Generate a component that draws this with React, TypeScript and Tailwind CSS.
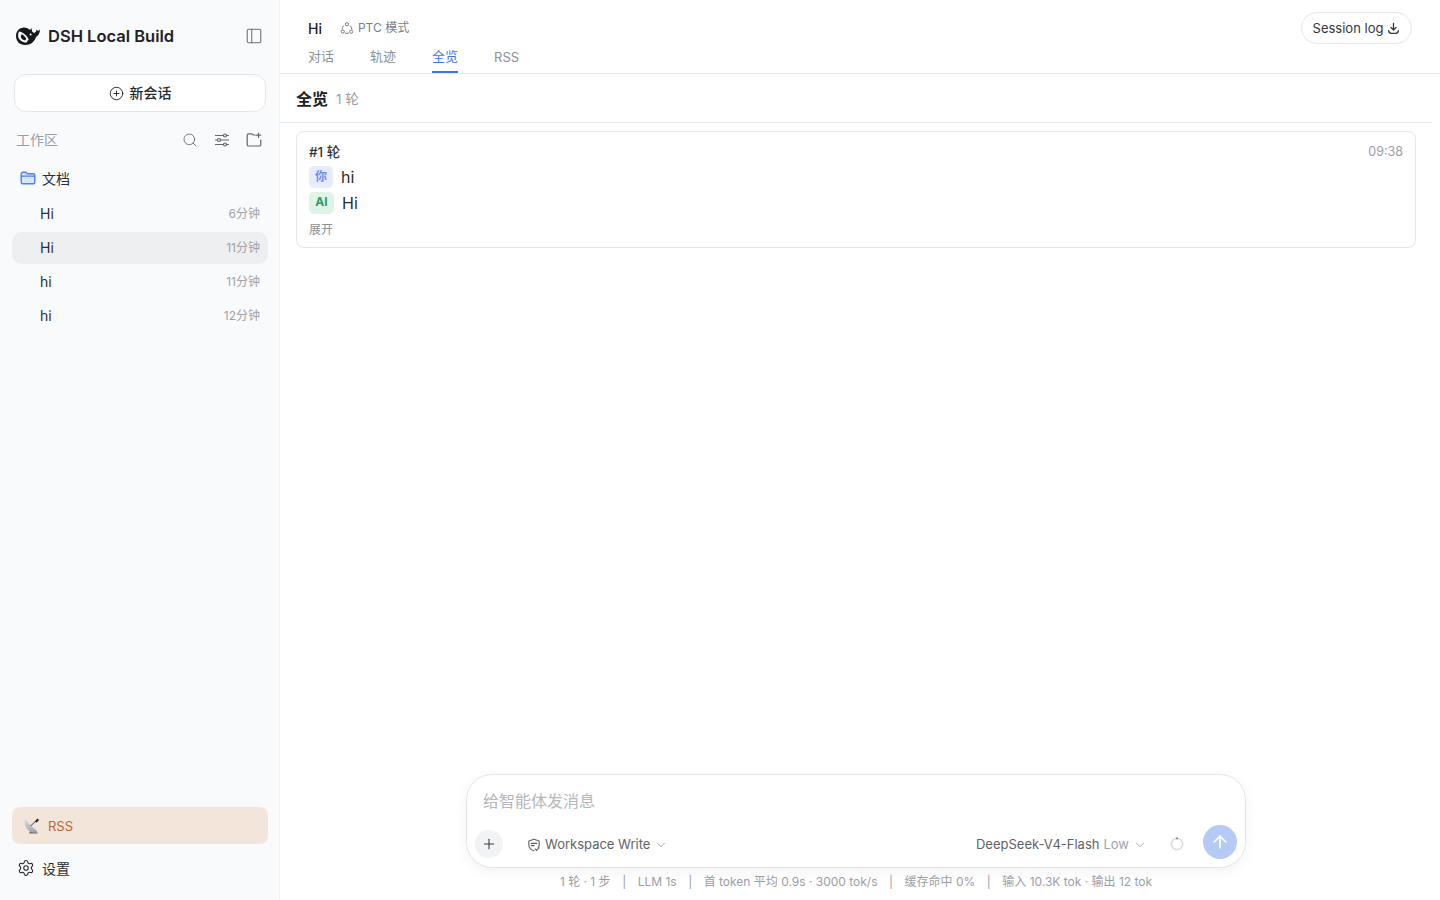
import { ChevronDown, CirclePlus, PanelLeft, Plus, Search, Settings, ArrowUp } from "lucide-react";

const sessions = [
  { title: "Hi", age: "6分钟" },
  { title: "Hi", age: "11分钟", active: true },
  { title: "hi", age: "11分钟" },
  { title: "hi", age: "12分钟" },
];

function WhaleLogo() {
  return (
    <svg viewBox="0 0 24 18" className="h-[18px] w-6 shrink-0">
      <path
        d="M8 .5C10.500.5 12.500 1.500 14 3l1.500-2 .6 3.600 1.900 1.400c1.500-.5 2.500-1.500 2.500-3.500l1.500 1.500L24 2.500C23.800 6 22.500 8.500 20 10c-1 3.500-4 8-11 8C3.500 18 0 14 0 9 0 4 3.500.5 8 .5z"
        fill="#16181d"
      />
      <path d="M3 4.500c3.500.4 7.500 3.500 9.700 7.700l-2.500 3.600C7 15.400 3.900 14 2.700 11.300 1.800 9.200 2 6.500 3 4.500z" fill="#f9fafc" />
      <path d="M5.800 7.200c2 1 3.600 2.700 4.500 4.600l-1.100 1.700C7.300 13 5.400 11.800 5 10.400c-.3-1.100 0-2.300.8-3.200z" fill="#16181d" />
      <circle cx="14.600" cy="7.400" r="1" fill="#f9fafc" />
    </svg>
  );
}

function TuneIcon() {
  return (
    <svg viewBox="0 0 16 16" className="h-4 w-4" fill="none" stroke="#62666c" strokeWidth="1.200" strokeLinecap="round">
      <path d="M1.500 3.500h8M12.500 3.500h2M1.500 8h2M6.500 8h8M1.500 12.500h8M12.500 12.500h2" />
      <circle cx="11" cy="3.500" r="1.500" />
      <circle cx="5" cy="8" r="1.500" />
      <circle cx="11" cy="12.500" r="1.500" />
    </svg>
  );
}

function FolderPlusIcon() {
  return (
    <svg viewBox="0 0 16 16" className="h-4 w-4" fill="none" stroke="#62666c" strokeWidth="1.200" strokeLinecap="round" strokeLinejoin="round">
      <path d="M9.200 3H7.200L6 1.800H2.800C1.900 1.800 1.200 2.500 1.200 3.400v9c0 .9.700 1.600 1.600 1.600h10.400c.9 0 1.600-.7 1.600-1.600V8" />
      <path d="M12.500 1v4.400M10.300 3.200h4.400" />
    </svg>
  );
}

function DocsFolderIcon() {
  return (
    <svg viewBox="0 0 16 16" className="h-4 w-4 shrink-0" fill="none" stroke="#4f83f1" strokeWidth="1.400" strokeLinejoin="round">
      <path d="M1.200 3.800c0-.9.700-1.600 1.600-1.600h3l1.500 1.500h5.900c.9 0 1.600.7 1.600 1.600v6.900c0 .9-.7 1.600-1.600 1.600H2.800c-.9 0-1.600-.7-1.600-1.600z" fill="#d6e4fc" />
      <path d="M1.200 7.200c0-.6.500-1.100 1.100-1.100h11.400c.6 0 1.100.5 1.100 1.100" />
    </svg>
  );
}

function SatelliteDish() {
  return (
    <svg viewBox="0 0 18 18" className="h-4 w-4 shrink-0">
      <defs>
        <linearGradient id="dish" x1="0" y1="0" x2="1" y2="1">
          <stop offset="0" stopColor="#d5dade" />
          <stop offset="1" stopColor="#949ca3" />
        </linearGradient>
      </defs>
      <path d="M8 12.500 5.500 17.500h10l-2-4z" fill="#6d7278" />
      <path d="M1 1.500c-1 5 .3 9 3 11.700 2.700 2.600 7.500 3.800 11.500 3z" fill="url(#dish)" />
      <path d="M7.500 9 13 3.500" stroke="#33363b" strokeWidth="1.100" />
      <path d="M12.200 3.800 15 .5l2 1.800-3 3.100z" fill="#26292e" />
    </svg>
  );
}

function PtcIcon() {
  return (
    <svg viewBox="0 0 14 14" className="h-3.5 w-3.5" fill="none" stroke="#7a7f87" strokeWidth="1">
      <circle cx="7" cy="3.200" r="1.600" />
      <circle cx="2.800" cy="10.600" r="1.600" />
      <circle cx="11.200" cy="10.600" r="1.600" />
      <path d="M3.900 4.500a5 5 0 0 0-1.700 3.900M10.100 4.500a5 5 0 0 1 1.700 3.900M5 12a5 5 0 0 0 4 0" />
    </svg>
  );
}

function ShieldCheckIcon() {
  return (
    <svg viewBox="0 0 14 14" className="h-3.5 w-3.5" fill="none" stroke="#5f6368" strokeWidth="1.100" strokeLinecap="round" strokeLinejoin="round">
      <path d="M7 1.200 12.200 3v3.400c0 1.300-.3 2.400-1 3.300M7 12.800c-2.900-1-5.200-3-5.200-6.400V3L7 1.200" />
      <path d="M4.300 5.400h5.400M4.300 7.600h3" />
      <path d="m8.300 11 1.300 1.300 2.300-2.500" />
    </svg>
  );
}

function DownloadTrayIcon() {
  return (
    <svg viewBox="0 0 14 14" className="h-[13px] w-[13px]" fill="none" stroke="#33363b" strokeWidth="1.400" strokeLinecap="round" strokeLinejoin="round">
      <path d="M7 1.500v7M4.200 5.800 7 8.600l2.800-2.800" />
      <path d="M1.800 9.200c0 1.900 1.100 3 2.900 3h4.600c1.800 0 2.900-1.100 2.900-3" />
    </svg>
  );
}

function ContextRing() {
  return (
    <svg viewBox="0 0 14 14" className="mt-1 h-[14px] w-[14px] shrink-0" fill="none" strokeWidth="1.600">
      <circle cx="7" cy="7" r="5.600" stroke="#dcdde0" />
      <path d="M6.200 1.450a5.600 5.600 0 0 1 1.600 0" stroke="#6b7076" />
    </svg>
  );
}

function Sidebar() {
  return (
    <aside className="flex h-full w-[280px] shrink-0 flex-col border-r border-[#f1f2f4] bg-[#f9fafc]">
      <div className="flex h-[74px] items-center justify-between pb-[2px] pl-4 pr-4">
        <div className="flex items-center gap-2">
          <WhaleLogo />
          <span className="text-[16.5px] font-semibold text-[#1f2125]">DSH Local Build</span>
        </div>
        <PanelLeft className="h-[18px] w-[18px] text-[#6b7076]" strokeWidth={1.4} />
      </div>
      <div className="pl-[14px] pr-[13px]">
        <button className="flex h-[38px] w-full items-center justify-center gap-[6px] rounded-[12px] border border-[#e5e6e9] bg-white pb-[2px] text-[14px] font-medium text-[#26282c]">
          <CirclePlus className="mt-[2px] h-[15px] w-[15px]" strokeWidth={1.5} />
          新会话
        </button>
      </div>
      <div className="mt-[18px] flex h-[20px] items-center justify-between pl-4 pr-[17px]">
        <span className="pb-[2px] text-[14px] text-[#9a9ea5]">工作区</span>
        <div className="flex items-center gap-4 text-[#62666c]">
          <Search className="h-4 w-4" strokeWidth={1.3} />
          <TuneIcon />
          <FolderPlusIcon />
        </div>
      </div>
      <div className="mt-[18px] flex h-5 items-center gap-[6px] pl-5 text-[14px] text-[#2c2e33]">
        <DocsFolderIcon />
        文档
      </div>
      <div className="mt-[10px] flex flex-col pl-3 pr-[11px]">
        {sessions.map((s, i) => (
          <div
            key={i}
            className={`flex h-8 items-center justify-between rounded-[10px] pl-7 pr-2 ${s.active ? "bg-[#eeeff1]" : ""} ${i > 0 ? "mt-[2px]" : ""}`}
          >
            <span className="pb-[2px] text-[14px] text-[#2c2e33]">{s.title}</span>
            <span className="text-[12px] text-[#a0a3a9]">{s.age}</span>
          </div>
        ))}
      </div>
      <div className="mt-auto pb-[22px] pl-3 pr-[11px]">
        <div className="flex h-[37px] items-center gap-2 rounded-[8px] bg-[#f4e5da] pl-3 text-[13px] text-[#c2623a]">
          <SatelliteDish />
          <span className="pt-[2px]">RSS</span>
        </div>
        <div className="mt-[14px] flex h-[20px] items-center gap-[7px] pl-[5px] text-[14px] text-[#2c2e33]">
          <Settings className="h-[18px] w-[18px]" strokeWidth={1.5} />
          设置
        </div>
      </div>
    </aside>
  );
}

function Composer() {
  return (
    <div className="mx-auto w-[780px]">
      <div className="h-[94px] rounded-[26px] border border-[#e4e5e8] bg-white shadow-[0_4px_14px_rgba(0,0,0,0.05)]">
        <div className="pl-4 pt-[14px] text-[16px] leading-[24px] text-[#b4b7bc]">给智能体发消息</div>
        <div className="mt-[12px] flex items-center pl-2 pr-2">
          <div className="mt-1 flex h-7 w-7 items-center justify-center rounded-full bg-[#f2f3f5]">
            <Plus className="h-4 w-4 text-[#3a3d42]" strokeWidth={1.6} />
          </div>
          <div className="ml-[24px] mt-[6px] flex items-center gap-1 text-[13px] text-[#5f6368]">
            <ShieldCheckIcon />
            Workspace Write
            <ChevronDown className="h-3.5 w-3.5 text-[#9a9ea5]" strokeWidth={1.4} />
          </div>
          <div className="ml-auto mt-[6px] flex items-center gap-1 text-[13px] text-[#5f6368]">
            DeepSeek-V4-Flash
            <span className="text-[#a0a3a9]">Low</span>
            <ChevronDown className="h-3.5 w-3.5 text-[#8b8f96]" strokeWidth={1.4} />
          </div>
          <div className="ml-[23px]">
            <ContextRing />
          </div>
          <div className="ml-[19px] flex h-[34px] w-[34px] items-center justify-center rounded-full bg-[#b5cbf5]">
            <ArrowUp className="h-5 w-5 text-white" strokeWidth={2} />
          </div>
        </div>
      </div>
      <div className="flex h-[28px] items-center justify-center gap-[11.5px] text-[12px] text-[#9a9ea5]">
        <span>1 轮 · 1 步</span>
        <span>|</span>
        <span>LLM 1s</span>
        <span>|</span>
        <span>首 token 平均 0.9s · 3000 tok/s</span>
        <span>|</span>
        <span>缓存命中 0%</span>
        <span>|</span>
        <span>输入 10.3K tok · 输出 12 tok</span>
      </div>
    </div>
  );
}

export default function App() {
  return (
    <div className="flex h-[900px] w-[1440px] overflow-hidden bg-white font-['Inter','Noto_Sans_CJK_SC',sans-serif]">
      <Sidebar />
      <main className="flex min-w-0 flex-1 flex-col">
        <header className="flex h-[74px] shrink-0 items-start justify-between border-b border-[#e6e7ea] pl-7 pr-7">
          <div>
            <div className="mt-[18px] flex h-5 items-center gap-[18px]">
              <span className="text-[14px] font-medium text-[#1f2125]">Hi</span>
              <span className="flex items-center gap-1 text-[12px] text-[#7a7f87]">
                <PtcIcon />
                PTC 模式
              </span>
            </div>
            <nav className="mt-[9px] flex gap-9 text-[13px] text-[#8b8f96]">
              <span className="h-[26px] leading-[18px]">对话</span>
              <span className="h-[26px] leading-[18px]">轨迹</span>
              <span className="h-[26px] border-b-2 border-[#3f76ea] leading-[18px] text-[#3f76ea]">全览</span>
              <span className="h-[26px] leading-[20px]">RSS</span>
            </nav>
          </div>
          <button className="mt-3 flex h-8 w-[111px] items-center justify-center gap-1 rounded-full border border-[#e6e7ea] bg-white pt-px text-[13px] text-[#33363b]">
            Session log
            <DownloadTrayIcon />
          </button>
        </header>
        <div className="flex min-h-0 flex-1 flex-col pr-2">
          <div className="flex h-[49px] shrink-0 items-center gap-2 border-b border-[#e6e7ea] px-4 pt-px">
            <span className="text-[16px] font-semibold text-[#1f2125]">全览</span>
            <span className="pt-[2px] text-[13.5px] text-[#9a9ea5]">1 轮</span>
          </div>
          <div className="px-4 pt-2">
            <div className="h-[117px] rounded-[8px] border border-[#e6e7ea] px-3 pt-[11px]">
              <div className="flex h-[18px] items-center justify-between">
                <span className="text-[13.5px] font-medium text-[#33363b]">#1 轮</span>
                <span className="text-[12.5px] text-[#9a9ea5]">09:38</span>
              </div>
              <div className="mt-[5px] flex h-[22px] items-center gap-2">
                <span className="flex h-[22px] w-6 items-center justify-center rounded-[5px] bg-[#e6ecfd] text-[12px] font-semibold text-[#6b8df0]">你</span>
                <span className="text-[16px] text-[#2c2e33]">hi</span>
              </div>
              <div className="mt-1 flex h-[22px] items-center gap-2">
                <span className="flex h-[22px] w-[25px] items-center justify-center rounded-[5px] bg-[#e0f3e8] pb-[2px] text-[12px] font-bold text-[#2a9d63]">AI</span>
                <span className="text-[16px] text-[#2c2e33]">Hi</span>
              </div>
              <div className="mt-[8px] text-[12px] leading-[16px] text-[#8b8f96]">展开</div>
            </div>
          </div>
        </div>
        <div className="shrink-0 pb-1 pr-2">
          <Composer />
        </div>
      </main>
    </div>
  );
}
